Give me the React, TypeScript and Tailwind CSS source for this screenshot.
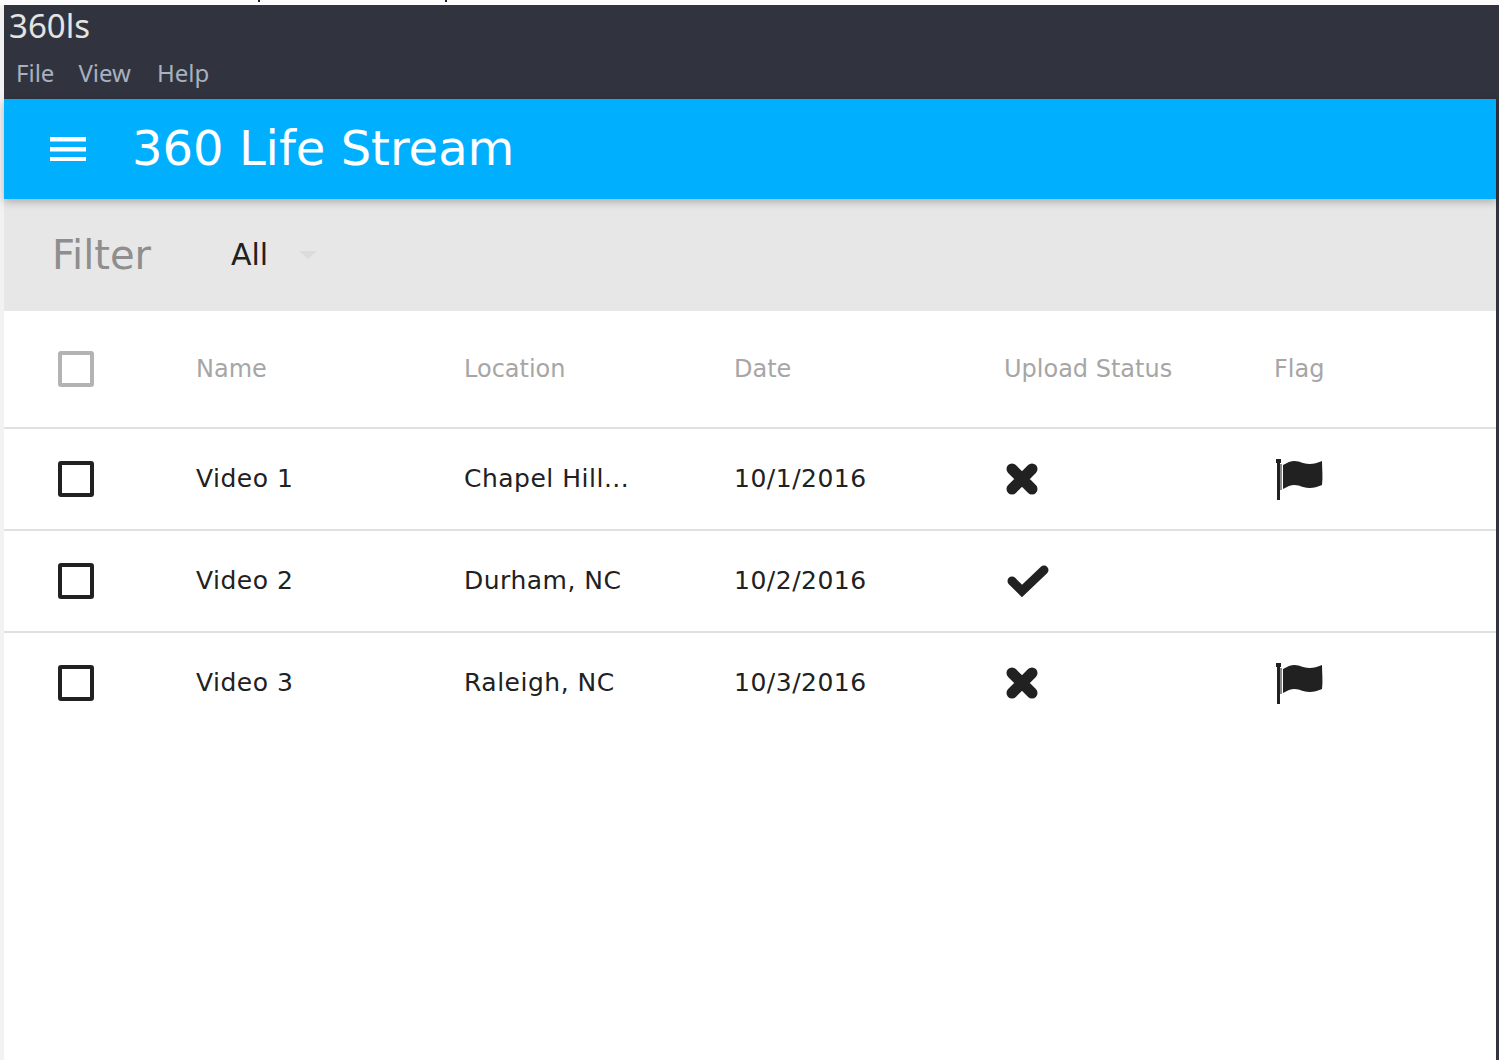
const rows = [
  { name: "Video 1", location: "Chapel Hill...", date: "10/1/2016", ok: false, flag: true },
  { name: "Video 2", location: "Durham, NC", date: "10/2/2016", ok: true, flag: false },
  { name: "Video 3", location: "Raleigh, NC", date: "10/3/2016", ok: false, flag: true },
];

function MenuIcon() {
  return (
    <svg width="36" height="24" viewBox="0 0 36 24" className="ml-[46px] text-white">
      <path d="M0 0h36v4.5H0zM0 10h36v4.5H0zM0 20h36v4.5H0z" fill="currentColor" />
    </svg>
  );
}

function CrossIcon() {
  return (
    <svg width="34" height="34" viewBox="0 0 34 34" className="ml-px text-[#212121]">
      <path d="M7 7 L27 27 M27 7 L7 27" stroke="currentColor" strokeWidth="11" strokeLinecap="round" />
    </svg>
  );
}

function CheckIcon() {
  return (
    <svg width="44" height="34" viewBox="0 0 44 34" className="relative top-px ml-[2px] text-[#212121]">
      <path d="M6 16 L16 26 L38 5" fill="none" stroke="currentColor" strokeWidth="9" strokeLinecap="round" strokeLinejoin="miter" />
    </svg>
  );
}

function FlagIcon() {
  return (
    <svg width="48" height="42" viewBox="0 0 48 42" className="ml-px text-[#212121]">
      <path d="M1 1h5v4H5v37H2V5H1z" fill="currentColor" />
      <path d="M5 6h2v26H5z" fill="#8a8a8a" />
      <path d="M8 7v24l6-3c5-2 9-1 14 1 7 2 12 1 19-2 1-8 0-16 0-24-7 3-12 4-19 2-5-2-9-3-14-1z" fill="currentColor" />
    </svg>
  );
}

export default function App() {
  return (
    <div className="h-[1060px] overflow-hidden bg-[#f2f2f2] font-['DejaVu_Sans',sans-serif]">
      {/* Sliver of whatever sits above the window */}
      <div className="flex h-[5px] items-start bg-[#fcfcfc]">
        <span className="ml-[258px] h-[2px] w-[2px] bg-[#1a1a40]" />
        <span className="ml-[185px] h-[2px] w-[2px] bg-[#1a1a40]" />
      </div>

      <div className="ml-1 h-[1055px] bg-[#31343f]">
        {/* Title bar */}
        <div className="h-[94px]">
          <div className="pl-[5px] text-[33px] leading-[41px] text-[#e4e4e4] font-['Noto_Sans',sans-serif]">360ls</div>
          <div className="flex pl-[12px] text-[24px] leading-[54px] text-[#a9b0bf] font-['Noto_Sans',sans-serif]">
            <span>File</span>
            <span className="ml-[24px]">View</span>
            <span className="ml-[26px]">Help</span>
          </div>
        </div>

        <div className="mr-[3px] h-[961px] bg-white">
          {/* App bar */}
          <div className="relative z-10 flex h-[100px] items-center bg-[#00b0ff] shadow-[0_3px_8px_rgba(0,0,0,0.25)]">
            <MenuIcon />
            <span className="ml-[46px] -translate-y-px text-[48px] text-white">360 Life Stream</span>
          </div>

          {/* Filter */}
          <div className="flex h-[112px] items-center bg-[#e7e7e7] pl-[48px]">
            <span className="w-[179px] text-[40px] text-[#8e8e8e]">Filter</span>
            <span className="-translate-y-px text-[30px] text-[#212121]">All</span>
            <span className="ml-[31px] h-0 w-0 border-x-[9px] border-t-[8px] border-x-transparent border-t-[#dcdcdc]" />
          </div>

          {/* Table */}
          <div className="flex h-[118px] items-center border-b-2 border-[#e0e0e0] text-[24px] text-[#a6a6a6]">
            <span className="ml-[54px] h-9 w-9 rounded-[3px] border-4 border-[#b3b3b3]" />
            <span className="ml-[102px] w-[268px]">Name</span>
            <span className="w-[270px]">Location</span>
            <span className="w-[270px]">Date</span>
            <span className="w-[270px]">Upload Status</span>
            <span>Flag</span>
          </div>
          {rows.map((row) => (
            <div
              key={row.name}
              className="flex h-[102px] items-center border-b-2 border-[#e0e0e0] text-[25px] tracking-[0.5px] text-[#212121] last:border-transparent"
            >
              <span className="ml-[54px] h-9 w-9 rounded-[3px] border-4 border-[#212121]" />
              <span className="ml-[102px] w-[268px]">{row.name}</span>
              <span className="w-[270px]">{row.location}</span>
              <span className="w-[270px]">{row.date}</span>
              <span className="w-[270px]">{row.ok ? <CheckIcon /> : <CrossIcon />}</span>
              <span>{row.flag && <FlagIcon />}</span>
            </div>
          ))}
        </div>
      </div>
    </div>
  );
}
